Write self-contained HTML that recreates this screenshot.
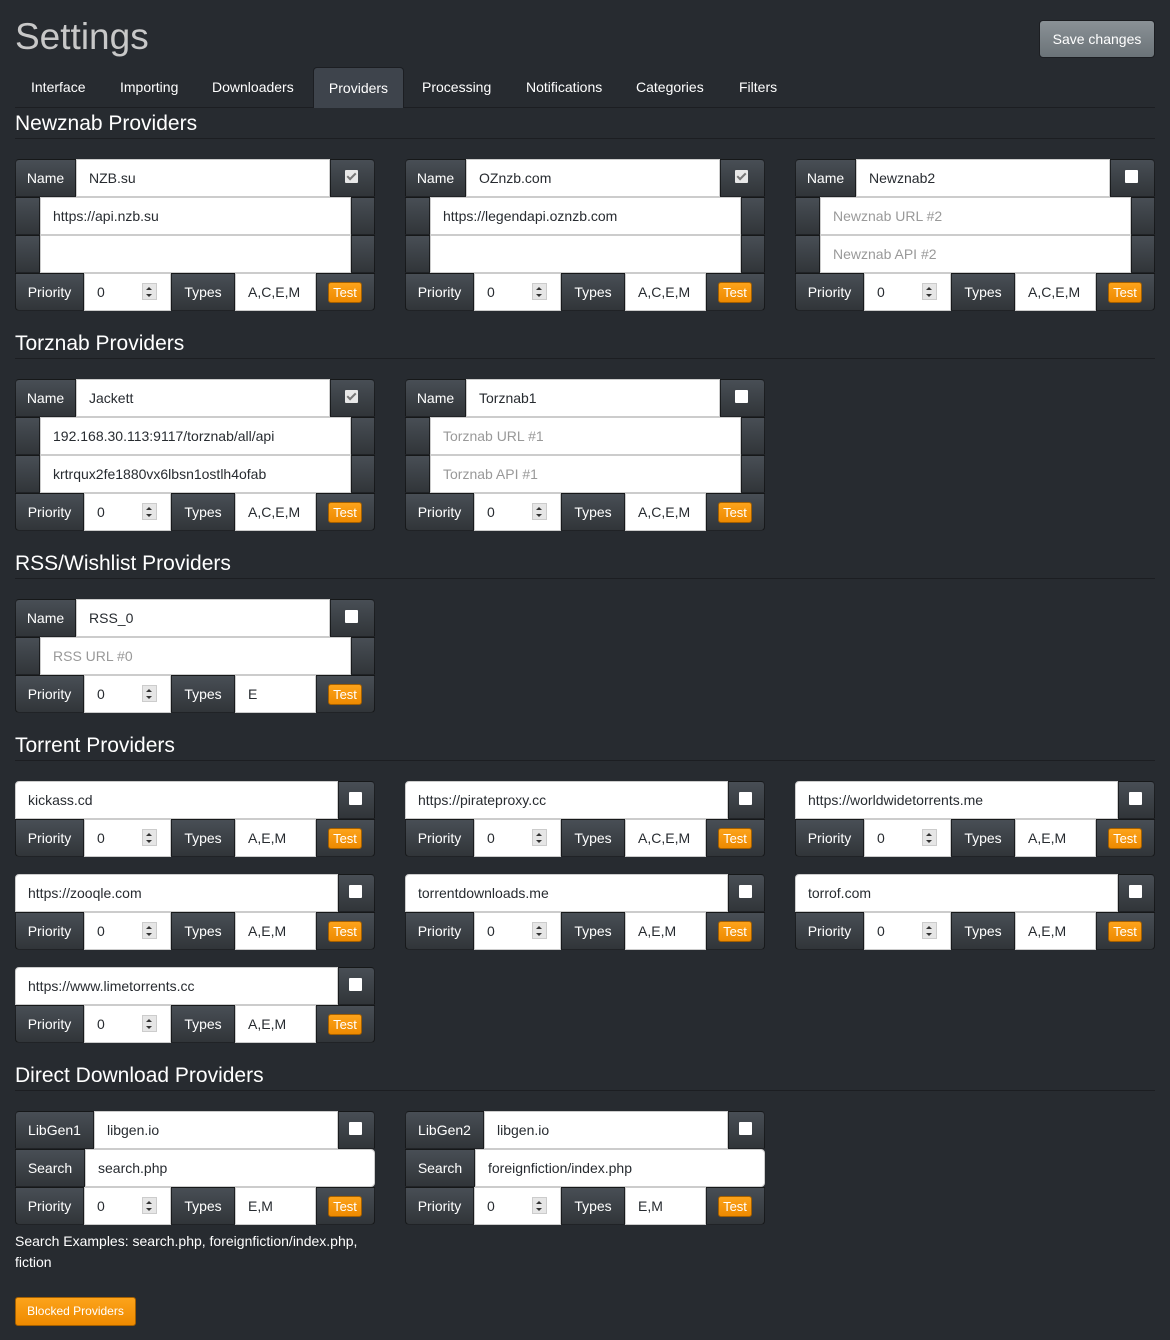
<!DOCTYPE html>
<html><head><meta charset="utf-8"><style>
*{box-sizing:border-box;margin:0;padding:0}
body{width:1170px;height:1340px;background:#272b30;font-family:"Liberation Sans",sans-serif;color:#fff;position:relative;overflow:hidden;font-size:14px}
h1{position:absolute;left:15px;top:16px;font-size:37px;font-weight:normal;color:#c8c8c8}
.save{position:absolute;left:1039px;top:20px;width:116px;height:38px;border-radius:4px;background:linear-gradient(#8a9196,#6b7378);border:1px solid #1c1e22;color:#fff;font-size:14px;line-height:36px;text-align:center}
.tabs{position:absolute;left:15px;top:67px;width:1140px;height:41px;border-bottom:1px solid #1c1e22}
.tab{position:absolute;top:0;height:41px;line-height:40px;font-size:14px;color:#fff}
.tab.act{background:#3e444c;border:1px solid #1c1e22;border-bottom:none;border-radius:4px 4px 0 0;text-align:center}
.hd{position:absolute;left:15px;font-size:21px;color:#fff}
.hr{position:absolute;left:15px;width:1140px;height:1px;background:#1c1e22}
.blk{position:absolute;width:360px}
.row{display:flex;height:38px}
.ad{background:linear-gradient(#484e55,#3a3f44 60%,#313539);border:1px solid rgba(0,0,0,.55);color:#fff;font-size:14px;line-height:36px;text-align:center;position:relative;flex:none}
.in{background:#fff;border:1px solid #ccc;color:#272b30;font-size:14px;line-height:36px;padding-left:12px;flex:none;position:relative;white-space:nowrap;overflow:hidden}
.ph{color:#999}
.blk .row:first-child .ad:first-child,.blk .row:first-child .in:first-child{border-top-left-radius:4px}
.blk .row:first-child>:last-child{border-top-right-radius:4px}
.blk .row:last-child>:first-child{border-bottom-left-radius:4px}
.blk .row:last-child>:last-child{border-bottom-right-radius:4px}
.cb{position:absolute;left:50%;top:50%;width:13px;height:13px;margin:-8px 0 0 -8px;background:#fff;border-radius:1px}
.cb.on{background:#e8e8e8}
.cb.on:after{content:"";position:absolute;left:4px;top:1px;width:3px;height:7px;border:solid #777;border-width:0 2px 2px 0;transform:rotate(45deg)}
.sp{position:absolute;left:57px;top:9px;width:15px;height:17px;background:#e6e6e6;border:1px solid #ccc}
.sp:before{content:"";position:absolute;left:3px;top:3px;border:3px solid transparent;border-bottom:3px solid #333;border-top:0}
.sp:after{content:"";position:absolute;left:3px;top:10px;border:3px solid transparent;border-top:3px solid #333;border-bottom:0}
.tb{position:absolute;left:11px;top:8px;width:34px;height:21px;background:linear-gradient(#fca31b,#ee8a00);border:1px solid #a35f00;border-radius:3px;color:#fff;font-size:13px;line-height:19px;text-align:center}
.note{position:absolute;left:15px;top:1231px;font-size:14px;line-height:21px;width:360px}
.blocked{position:absolute;left:15px;top:1297px;width:121px;height:29px;border-radius:3px;background:linear-gradient(#fca31b,#ee8a00);border:1px solid #a35f00;color:#fff;font-size:12px;line-height:27px;text-align:center}
</style></head><body>
<h1>Settings</h1>
<div class="save">Save changes</div>
<div class="tabs">
<div class="tab" style="left:16px">Interface</div>
<div class="tab" style="left:105px">Importing</div>
<div class="tab" style="left:197px">Downloaders</div>
<div class="tab act" style="left:298px;width:91px">Providers</div>
<div class="tab" style="left:407px">Processing</div>
<div class="tab" style="left:511px">Notifications</div>
<div class="tab" style="left:621px">Categories</div>
<div class="tab" style="left:724px">Filters</div>
</div>

<div class="hd" style="top:112px">Newznab Providers</div><div class="hr" style="top:138px"></div>
<div class="hd" style="top:332px">Torznab Providers</div><div class="hr" style="top:358px"></div>
<div class="hd" style="top:552px">RSS/Wishlist Providers</div><div class="hr" style="top:578px"></div>
<div class="hd" style="top:734px">Torrent Providers</div><div class="hr" style="top:760px"></div>
<div class="hd" style="top:1064px">Direct Download Providers</div><div class="hr" style="top:1090px"></div>

<div class="blk" style="left:15px;top:159px">
<div class="row"><div class="ad" style="width:61px">Name</div><div class="in" style="width:254px">NZB.su</div><div class="ad" style="width:45px"><span class="cb on"></span></div></div>
<div class="row"><div class="ad" style="width:25px"></div><div class="in" style="width:311px">https://api.nzb.su</div><div class="ad" style="width:24px"></div></div>
<div class="row"><div class="ad" style="width:25px"></div><div class="in" style="width:311px"></div><div class="ad" style="width:24px"></div></div>
<div class="row"><div class="ad" style="width:69px">Priority</div><div class="in" style="width:87px">0<span class="sp"></span></div><div class="ad" style="width:64px">Types</div><div class="in" style="width:81px">A,C,E,M</div><div class="ad" style="width:59px"><span class="tb">Test</span></div></div>
</div>
<div class="blk" style="left:405px;top:159px">
<div class="row"><div class="ad" style="width:61px">Name</div><div class="in" style="width:254px">OZnzb.com</div><div class="ad" style="width:45px"><span class="cb on"></span></div></div>
<div class="row"><div class="ad" style="width:25px"></div><div class="in" style="width:311px">https://legendapi.oznzb.com</div><div class="ad" style="width:24px"></div></div>
<div class="row"><div class="ad" style="width:25px"></div><div class="in" style="width:311px"></div><div class="ad" style="width:24px"></div></div>
<div class="row"><div class="ad" style="width:69px">Priority</div><div class="in" style="width:87px">0<span class="sp"></span></div><div class="ad" style="width:64px">Types</div><div class="in" style="width:81px">A,C,E,M</div><div class="ad" style="width:59px"><span class="tb">Test</span></div></div>
</div>
<div class="blk" style="left:795px;top:159px">
<div class="row"><div class="ad" style="width:61px">Name</div><div class="in" style="width:254px">Newznab2</div><div class="ad" style="width:45px"><span class="cb"></span></div></div>
<div class="row"><div class="ad" style="width:25px"></div><div class="in ph" style="width:311px">Newznab URL #2</div><div class="ad" style="width:24px"></div></div>
<div class="row"><div class="ad" style="width:25px"></div><div class="in ph" style="width:311px">Newznab API #2</div><div class="ad" style="width:24px"></div></div>
<div class="row"><div class="ad" style="width:69px">Priority</div><div class="in" style="width:87px">0<span class="sp"></span></div><div class="ad" style="width:64px">Types</div><div class="in" style="width:81px">A,C,E,M</div><div class="ad" style="width:59px"><span class="tb">Test</span></div></div>
</div>

<div class="blk" style="left:15px;top:379px">
<div class="row"><div class="ad" style="width:61px">Name</div><div class="in" style="width:254px">Jackett</div><div class="ad" style="width:45px"><span class="cb on"></span></div></div>
<div class="row"><div class="ad" style="width:25px"></div><div class="in" style="width:311px">192.168.30.113:9117/torznab/all/api</div><div class="ad" style="width:24px"></div></div>
<div class="row"><div class="ad" style="width:25px"></div><div class="in" style="width:311px">krtrqux2fe1880vx6lbsn1ostlh4ofab</div><div class="ad" style="width:24px"></div></div>
<div class="row"><div class="ad" style="width:69px">Priority</div><div class="in" style="width:87px">0<span class="sp"></span></div><div class="ad" style="width:64px">Types</div><div class="in" style="width:81px">A,C,E,M</div><div class="ad" style="width:59px"><span class="tb">Test</span></div></div>
</div>
<div class="blk" style="left:405px;top:379px">
<div class="row"><div class="ad" style="width:61px">Name</div><div class="in" style="width:254px">Torznab1</div><div class="ad" style="width:45px"><span class="cb"></span></div></div>
<div class="row"><div class="ad" style="width:25px"></div><div class="in ph" style="width:311px">Torznab URL #1</div><div class="ad" style="width:24px"></div></div>
<div class="row"><div class="ad" style="width:25px"></div><div class="in ph" style="width:311px">Torznab API #1</div><div class="ad" style="width:24px"></div></div>
<div class="row"><div class="ad" style="width:69px">Priority</div><div class="in" style="width:87px">0<span class="sp"></span></div><div class="ad" style="width:64px">Types</div><div class="in" style="width:81px">A,C,E,M</div><div class="ad" style="width:59px"><span class="tb">Test</span></div></div>
</div>

<div class="blk" style="left:15px;top:599px">
<div class="row"><div class="ad" style="width:61px">Name</div><div class="in" style="width:254px">RSS_0</div><div class="ad" style="width:45px"><span class="cb"></span></div></div>
<div class="row"><div class="ad" style="width:25px"></div><div class="in ph" style="width:311px">RSS URL #0</div><div class="ad" style="width:24px"></div></div>
<div class="row"><div class="ad" style="width:69px">Priority</div><div class="in" style="width:87px">0<span class="sp"></span></div><div class="ad" style="width:64px">Types</div><div class="in" style="width:81px">E</div><div class="ad" style="width:59px"><span class="tb">Test</span></div></div>
</div>

<div class="blk" style="left:15px;top:781px">
<div class="row"><div class="in" style="width:323px">kickass.cd</div><div class="ad" style="width:37px"><span class="cb"></span></div></div>
<div class="row"><div class="ad" style="width:69px">Priority</div><div class="in" style="width:87px">0<span class="sp"></span></div><div class="ad" style="width:64px">Types</div><div class="in" style="width:81px">A,E,M</div><div class="ad" style="width:59px"><span class="tb">Test</span></div></div>
</div>
<div class="blk" style="left:405px;top:781px">
<div class="row"><div class="in" style="width:323px">https://pirateproxy.cc</div><div class="ad" style="width:37px"><span class="cb"></span></div></div>
<div class="row"><div class="ad" style="width:69px">Priority</div><div class="in" style="width:87px">0<span class="sp"></span></div><div class="ad" style="width:64px">Types</div><div class="in" style="width:81px">A,C,E,M</div><div class="ad" style="width:59px"><span class="tb">Test</span></div></div>
</div>
<div class="blk" style="left:795px;top:781px">
<div class="row"><div class="in" style="width:323px">https://worldwidetorrents.me</div><div class="ad" style="width:37px"><span class="cb"></span></div></div>
<div class="row"><div class="ad" style="width:69px">Priority</div><div class="in" style="width:87px">0<span class="sp"></span></div><div class="ad" style="width:64px">Types</div><div class="in" style="width:81px">A,E,M</div><div class="ad" style="width:59px"><span class="tb">Test</span></div></div>
</div>
<div class="blk" style="left:15px;top:874px">
<div class="row"><div class="in" style="width:323px">https://zooqle.com</div><div class="ad" style="width:37px"><span class="cb"></span></div></div>
<div class="row"><div class="ad" style="width:69px">Priority</div><div class="in" style="width:87px">0<span class="sp"></span></div><div class="ad" style="width:64px">Types</div><div class="in" style="width:81px">A,E,M</div><div class="ad" style="width:59px"><span class="tb">Test</span></div></div>
</div>
<div class="blk" style="left:405px;top:874px">
<div class="row"><div class="in" style="width:323px">torrentdownloads.me</div><div class="ad" style="width:37px"><span class="cb"></span></div></div>
<div class="row"><div class="ad" style="width:69px">Priority</div><div class="in" style="width:87px">0<span class="sp"></span></div><div class="ad" style="width:64px">Types</div><div class="in" style="width:81px">A,E,M</div><div class="ad" style="width:59px"><span class="tb">Test</span></div></div>
</div>
<div class="blk" style="left:795px;top:874px">
<div class="row"><div class="in" style="width:323px">torrof.com</div><div class="ad" style="width:37px"><span class="cb"></span></div></div>
<div class="row"><div class="ad" style="width:69px">Priority</div><div class="in" style="width:87px">0<span class="sp"></span></div><div class="ad" style="width:64px">Types</div><div class="in" style="width:81px">A,E,M</div><div class="ad" style="width:59px"><span class="tb">Test</span></div></div>
</div>
<div class="blk" style="left:15px;top:967px">
<div class="row"><div class="in" style="width:323px">https://www.limetorrents.cc</div><div class="ad" style="width:37px"><span class="cb"></span></div></div>
<div class="row"><div class="ad" style="width:69px">Priority</div><div class="in" style="width:87px">0<span class="sp"></span></div><div class="ad" style="width:64px">Types</div><div class="in" style="width:81px">A,E,M</div><div class="ad" style="width:59px"><span class="tb">Test</span></div></div>
</div>

<div class="blk" style="left:15px;top:1111px">
<div class="row"><div class="ad" style="width:79px">LibGen1</div><div class="in" style="width:244px">libgen.io</div><div class="ad" style="width:37px"><span class="cb"></span></div></div>
<div class="row"><div class="ad" style="width:70px">Search</div><div class="in" style="width:290px;border-radius:0 4px 4px 0">search.php</div></div>
<div class="row"><div class="ad" style="width:69px">Priority</div><div class="in" style="width:87px">0<span class="sp"></span></div><div class="ad" style="width:64px">Types</div><div class="in" style="width:81px">E,M</div><div class="ad" style="width:59px"><span class="tb">Test</span></div></div>
</div>
<div class="blk" style="left:405px;top:1111px">
<div class="row"><div class="ad" style="width:79px">LibGen2</div><div class="in" style="width:244px">libgen.io</div><div class="ad" style="width:37px"><span class="cb"></span></div></div>
<div class="row"><div class="ad" style="width:70px">Search</div><div class="in" style="width:290px;border-radius:0 4px 4px 0">foreignfiction/index.php</div></div>
<div class="row"><div class="ad" style="width:69px">Priority</div><div class="in" style="width:87px">0<span class="sp"></span></div><div class="ad" style="width:64px">Types</div><div class="in" style="width:81px">E,M</div><div class="ad" style="width:59px"><span class="tb">Test</span></div></div>
</div>

<div class="note">Search Examples: search.php, foreignfiction/index.php, fiction</div>
<div class="blocked">Blocked Providers</div>
</body></html>
